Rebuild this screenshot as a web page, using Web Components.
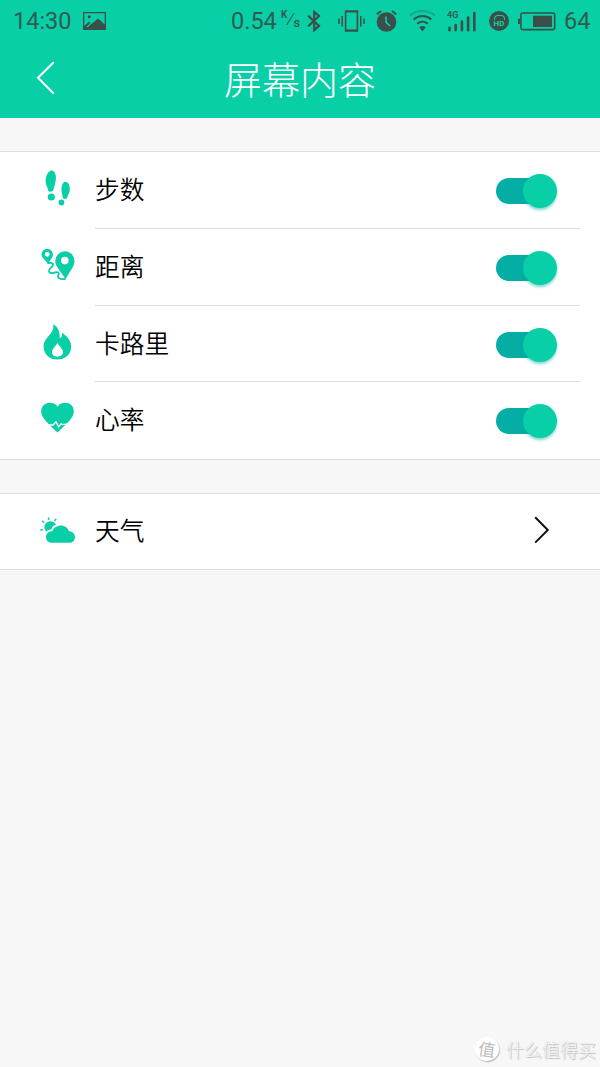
<!DOCTYPE html>
<html lang="zh-CN">
<head>
<meta charset="utf-8">
<title>屏幕内容</title>
<style>
  :root {
    --color-primary: #09cfa7;
    --color-track: #04aea5;
    --color-status: #2f5c50;
    --color-page: #f7f7f7;
    --color-line: #dedede;
    --font-cjk: "Noto Sans CJK SC", sans-serif;
  }
  body {
    margin: 0;
    background: var(--color-page);
    font-family: var(--font-cjk);
  }
</style>
</head>
<body>
<app-screen>
  <status-bar slot="status"></status-bar>
  <nav-header slot="header">屏幕内容</nav-header>
  <list-group>
    <list-row icon="steps">步数<toggle-switch slot="action"></toggle-switch></list-row>
    <list-row icon="distance">距离<toggle-switch slot="action"></toggle-switch></list-row>
    <list-row icon="flame">卡路里<toggle-switch slot="action"></toggle-switch></list-row>
    <list-row icon="heart">心率<toggle-switch slot="action"></toggle-switch></list-row>
  </list-group>
  <list-group>
    <list-row icon="weather">天气<ui-icon slot="action" name="next"></ui-icon></list-row>
  </list-group>
  <water-mark slot="footer">什么值得买</water-mark>
</app-screen>

<script>
const define = (name, html, setup) => {
  const template = document.createElement('template')
  template.innerHTML = html

  customElements.define(name, class extends HTMLElement {
    constructor() {
      super();
      this.attachShadow({ mode: "open" });
      this.shadowRoot.append(template.content.cloneNode(true))
    }
    connectedCallback() {
      if (setup) setup(this, this.shadowRoot)
    }
  })
}

// name: [width, height, markup]
const icons = {
  picture: [23, 18, `
    <path fill-rule="evenodd" d="M0 0H23V18H0ZM1.3 1.3V14L6 9.5L8.5 12L15 6.5L21.7 12.5V1.3Z"/>
    <circle cx="6.2" cy="4.8" r="1.5"/>
    <path d="M4.2 15L8 11.2" stroke="#09cfa7" stroke-width="1.2"/>`],
  bluetooth: [14, 22, `
    <path fill="none" stroke="currentColor" stroke-width="2.2" d="M1.2 5.8L12 16L7.2 20.2V1.8L12 6L1.2 16.2"/>`],
  vibrate: [27, 22, `
    <path fill="none" stroke="currentColor" stroke-width="1.6" d="M7.6 1.2H19.4V20.8H7.6Z"/>
    <path fill="none" stroke="currentColor" stroke-width="1.5" d="M4.2 6V16.5M1 8.5V14M22.8 6V16.5M26 8.5V14"/>
    <path d="M7 0.4H20V2.6H7ZM7 19.4H20V21.6H7Z"/>`],
  alarm: [21, 22, `
    <circle cx="10.5" cy="12" r="9.8"/>
    <path fill="none" stroke="currentColor" stroke-width="2" d="M1 4.5Q2.5 2 5.2 1.2M20 4.5Q18.5 2 15.8 1.2"/>
    <path fill="none" stroke="#09cfa7" stroke-width="1.6" d="M10 6.5V12.2L14.2 16"/>`],
  wifi: [27, 22, `
    <g fill="none" stroke="currentColor" stroke-width="2">
      <path opacity=".3" d="M1 5.5C8-.6 19-.6 26 5.5"/>
      <path d="M4.7 9.6C10 4.9 17 4.9 22.3 9.6"/>
      <path d="M8.2 13.8C11.4 11 15.6 11 18.8 13.8"/>
    </g>
    <path d="M10.3 17.2Q13.5 14.8 16.7 17.2L13.5 21.5Z"/>`],
  signal: [28, 21, `
    <g fill="none" stroke="currentColor" stroke-width="2.6" stroke-linecap="round">
      <path d="M1.5 16.8V19.2M7.7 14V19.2M13.9 10.5V19.2M20.1 6.5V19.2M26.3 2V19.2"/>
    </g>`],
  battery: [38, 19, `
    <rect x="2.9" y="1" width="33.8" height="16.6" rx="2" fill="none" stroke="currentColor" stroke-width="1.6"/>
    <path d="M0 6.8H2.2V12H0ZM15 3.7H34V15H15Z"/>`],
  back: [20, 34, `
    <path fill="none" stroke="currentColor" stroke-width="2" stroke-linecap="round" d="M17.2 1.8L2 16.8L17.2 32"/>`],
  next: [16, 28, `
    <path fill="none" stroke="#111" stroke-width="2" d="M1.2 1.2L13.8 14L1.2 26.6"/>`],
  steps: [36, 40, `
    <path d="M11.8 .4C15.2 .4 16.4 5.6 15.8 10C15.3 14 14 17 13.2 20.4Q10.5 22.6 8.3 21C8 17.2 5.6 15.5 5.6 11C5.6 6 8.3 .4 11.8 .4Z"/>
    <circle cx="11.3" cy="27" r="3.6"/>
    <path d="M25.2 11.8C28.2 11.6 29.8 15.4 29.8 19C29.8 23.4 27.6 25 27.2 28Q25.4 29.8 22.8 28.2C22.8 25 21.6 23.4 21.5 20C21.4 16 22.7 12 25.2 11.8Z"/>
    <circle cx="21.4" cy="32.5" r="2.9"/>`],
  distance: [36, 40, `
    <path fill-rule="evenodd" d="M24.8 4.3A9.6 9.6 0 0 1 34.5 14C34.5 20 28.5 26 25.4 32.4C22.5 26 15.2 20 15.2 14A9.6 9.6 0 0 1 24.8 4.3ZM24.8 9.8A3.8 3.8 0 1 0 24.8 17.4A3.8 3.8 0 1 0 24.8 9.8Z"/>
    <path fill-rule="evenodd" d="M7.2 1.8A5.7 5.7 0 0 1 12.9 7.5C12.9 11 9.5 13.5 8 17C6.3 13.5 1.5 11 1.5 7.5A5.7 5.7 0 0 1 7.2 1.8ZM7.2 4.9A2.4 2.4 0 1 0 7.2 9.7A2.4 2.4 0 1 0 7.2 4.9Z"/>
    <path fill="none" stroke="currentColor" stroke-width="1.8" d="M7.5 16.4C9.5 15.4 13.4 15.4 13 18C12.6 20.4 8.6 21.4 9 24.2C9.4 27 13.2 26.4 15.2 25.4C18 24.4 19.4 26 18.4 28C17.2 30.8 19.5 32.8 25.4 32"/>`],
  flame: [36, 40, `
    <path fill-rule="evenodd" d="M13.2 .2C18.5 3 20.2 8.5 19.7 14.2C22 13.3 22.6 11.5 21.8 8.5C27 12 31.2 17 31.2 22.5C31.2 30.5 25 35.6 17.4 35.6C9.6 35.6 3.6 30.3 3.6 22.5C3.6 12.8 14.8 10.5 13.2 .2ZM17.4 19C15 23 12 25 12 28.3C12 31 14.5 32.7 17.4 32.7C20.4 32.7 23 31 23 28.3C23 25 19.8 23 17.4 19Z"/>`],
  heart: [36, 40, `
    <path d="M17.5 6.4C19.3 3.8 22.5 2.8 25.5 2.8C30.5 2.8 33.8 6.5 33.8 11.3C33.8 18 27 23.5 17.5 32.5C8 23.5 1.2 18 1.2 11.3C1.2 6.5 4.5 2.8 9.5 2.8C12.5 2.8 15.7 3.8 17.5 6.4Z"/>
    <path fill="none" stroke="#fff" stroke-width="1.3" d="M8 24.8L13 25L16 21.8L18.6 26.8L21.2 23.6L22.3 24.6L28.5 23.8"/>`],
  weather: [36, 40, `
    <path d="M5.3 18.2A6 6 0 0 1 4.4 15A6 6 0 0 1 10.2 9.2C13 9.2 15 10.4 16 12.7C12.8 13.6 11.7 15.6 11.3 17.4C8.7 17.4 6.8 18.4 6 20Z"/>
    <path fill="none" stroke="currentColor" stroke-width="1.5" d="M8.6 5.4V8M2 9L4.2 10.6M.3 18.2L3 17.4M14.6 9L16.2 6.6"/>
    <path d="M11.8 30.8C8.3 30.8 6 28.4 6 25C6 21.5 8.8 19 12.3 19.2C13.7 15.7 17 13.5 20.8 13.5C25 13.5 28 16 28.8 19.3C32.5 19.3 35 21.9 35 25.2C35 28.4 32.5 30.8 29 30.8Z"/>`]
}

define('ui-icon', `
 <style>
  :host { display: block; flex: none; }
  svg   { display: block; fill: currentColor; overflow: visible; }
 </style>
 <svg></svg>
`, (host, root) => {
  const [width, height, markup] = icons[host.getAttribute('name')]
  const svg = root.querySelector('svg')
  svg.setAttribute('width', width)
  svg.setAttribute('height', height)
  svg.setAttribute('viewBox', `0 0 ${width} ${height}`)
  svg.innerHTML = markup
})

define('status-bar', `
 <style>
  :host {
    display: flex;
    align-items: center;
    box-sizing: border-box;
    height: 42px;
    padding: 0 10px 0 13px;
    color: var(--color-status);
    font: 23.5px/42px Roboto, sans-serif;
  }
  ui-icon  { color: #3b4f4a; }
  .time    { width: 70px; }
  .speed   { margin-left: auto; width: 50px; }
  .unit    { display: flex; width: 25px; font-size: 10px; line-height: 12px; }
  .unit i  { font-style: normal; }
  .unit i:nth-child(1) { margin-top: -4px; font-weight: 700; }
  .unit i:nth-child(2) { font-size: 15px; transform: skewX(-14deg); }
  .unit i:nth-child(3) { margin-top: 4px; font-size: 13px; font-weight: 500; }
  .signal  { display: grid; margin-left: 12px; }
  .signal > * { grid-area: 1 / 1; }
  .signal span { font: bold 9px/9px Roboto, sans-serif; }
  .hd {
    display: grid;
    place-items: center;
    width: 20px;
    height: 20px;
    margin-left: 13px;
    border-radius: 50%;
    background: #3b4f4a;
  }
  .hd span {
    grid-area: 1 / 1;
    margin-top: 5px;
    color: var(--color-primary);
    font: bold 8px/8px Roboto, sans-serif;
  }
  .hd::before {
    content: "";
    grid-area: 1 / 1;
    width: 11px;
    height: 5px;
    margin-bottom: 7px;
    box-sizing: border-box;
    border: 1px solid var(--color-primary);
    border-bottom: 0;
    border-radius: 4px 4px 0 0;
  }
  .level { width: 26px; margin-left: 8px; }
 </style>
 <span class="time">14:30</span>
 <ui-icon name="picture"></ui-icon>
 <span class="speed">0.54</span>
 <span class="unit"><i>K</i><i>/</i><i>s</i></span>
 <ui-icon name="bluetooth" style="margin-left: 1px"></ui-icon>
 <ui-icon name="vibrate" style="margin-left: 17px"></ui-icon>
 <ui-icon name="alarm" style="margin-left: 11px"></ui-icon>
 <ui-icon name="wifi" style="margin-left: 12px"></ui-icon>
 <div class="signal" style="margin-left: 11px"><span>4G</span><ui-icon name="signal" style="margin-left: 1px"></ui-icon></div>
 <div class="hd"><span>HD</span></div>
 <ui-icon name="battery" style="margin-left: 9px"></ui-icon>
 <span class="level">64</span>
`)

define('nav-header', `
 <style>
  :host {
    display: grid;
    grid-template-columns: 70px 1fr 70px;
    align-items: start;
    height: 76px;
    color: #fff;
  }
  ui-icon { margin: 18.5px 0 0 36px; }
  h1 {
    margin: 0;
    text-align: center;
    font-size: 38px;
    font-weight: 300;
    line-height: 72px;
  }
 </style>
 <ui-icon name="back"></ui-icon>
 <h1><slot></slot></h1>
`)

define('toggle-switch', `
 <style>
  :host {
    display: flex;
    align-items: center;
    justify-content: flex-end;
    width: 61px;
    height: 26px;
    margin-top: 2px;
    border-radius: 13px;
    background: linear-gradient(90deg, var(--color-track) 50px, transparent 50px);
  }
  span {
    width: 34px;
    height: 34px;
    border-radius: 50%;
    background: var(--color-primary);
    box-shadow: 0 2px 3px rgba(4, 174, 165, .5);
  }
 </style>
 <span></span>
`)

define('list-row', `
 <style>
  :host {
    display: flex;
    height: 77px;
    padding-left: 40px;
    padding-right: 20px;
  }
  .icon { margin: 18px 19px 0 0; color: var(--color-primary); }
  .body {
    flex: 1;
    display: flex;
    align-items: center;
    justify-content: space-between;
    box-sizing: border-box;
    border-bottom: 1px solid var(--color-line);
    padding-right: 23px;
    color: #000;
    font-size: 24.7px;
    font-weight: 350;
    line-height: 36px;
  }
  .label { margin-top: -4px; }
  :host(:last-of-type) .body { border-bottom-color: transparent; }
  ::slotted(ui-icon) { margin: -2px 7px 0 0; }
 </style>
 <div class="icon"></div>
 <div class="body"><span class="label"><slot></slot></span><slot name="action"></slot></div>
`, (host, root) => {
  root.querySelector('.icon').innerHTML = `<ui-icon name="${host.getAttribute('icon')}"></ui-icon>`
})

define('list-group', `
 <style>
  :host {
    display: block;
    margin-top: 33px;
    border: solid var(--color-line);
    border-width: 1px 0;
    background: #fff;
  }
  ::slotted(list-row:nth-of-type(3)) { height: 76px; }
  ::slotted(list-row:only-of-type)   { height: 75px; }
 </style>
 <slot></slot>
`)

define('water-mark', `
 <style>
  :host {
    display: flex;
    align-items: center;
    justify-content: flex-end;
    gap: 7px;
    padding: 0 4px 5px 0;
    color: #f8f8f8;
    font-size: 18px;
    font-weight: 300;
    line-height: 26px;
    text-shadow: 1px 1px 1px #bbb, 0 0 1px #bbb;
  }
  .badge {
    width: 24px;
    height: 24px;
    border-radius: 50%;
    background: #fff;
    box-shadow: 1px 1px 1px #bbb;
    color: #bbb;
    font-size: 17px;
    font-weight: 400;
    line-height: 23px;
    text-align: center;
    text-shadow: none;
    transform: rotate(8deg);
  }
 </style>
 <span class="badge">值</span>
 <span><slot></slot></span>
`)

define('app-screen', `
 <style>
  :host {
    display: flex;
    flex-direction: column;
    width: 600px;
    height: 1067px;
    background: var(--color-page);
  }
  header { background: var(--color-primary); }
  main   { flex: 1; }
 </style>
 <header>
  <slot name="status"></slot>
  <slot name="header"></slot>
 </header>
 <main><slot></slot></main>
 <slot name="footer"></slot>
`)
</script>
</body>
</html>
